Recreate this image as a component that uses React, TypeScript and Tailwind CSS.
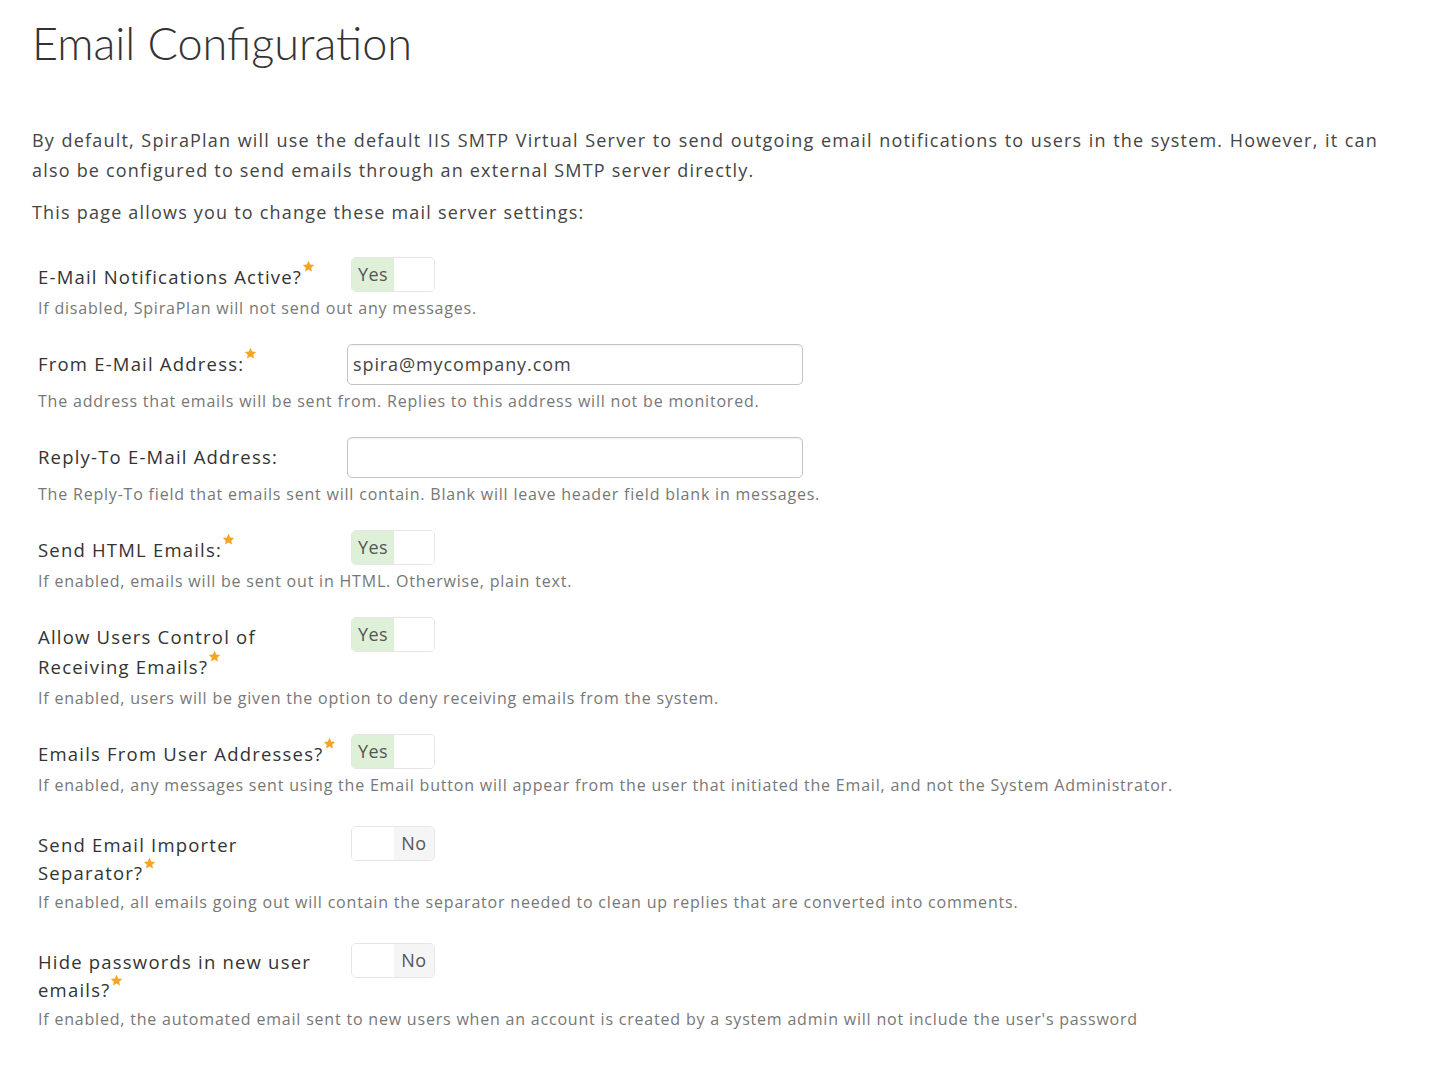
import React from "react";

const body = { fontFamily: '"Open Sans", "Noto Sans", sans-serif' };

function Star() {
  return (
    <svg viewBox="0 0 24 24" className="inline-block w-[13px] h-[13px] align-top -mt-[2px]">
      <polygon
        points="12,1.5 15.1,8.3 22.5,9.1 17,14.1 18.5,21.4 12,17.7 5.5,21.4 7,14.1 1.5,9.1 8.9,8.3"
        fill="#f5a524"
      />
    </svg>
  );
}

function Toggle({ on }: { on: boolean }) {
  return (
    <div className="flex w-[84px] h-[35px] rounded-[5px] border border-[#e6e6e6] overflow-hidden text-[18px] text-[#555] tracking-[0.5px]">
      {on ? (
        <>
          <div className="w-[42px] bg-[#dff0d8] flex items-center justify-center">Yes</div>
          <div className="flex-1 bg-white" />
        </>
      ) : (
        <>
          <div className="w-[42px] bg-white" />
          <div className="flex-1 bg-[#f5f5f5] flex items-center justify-center">No</div>
        </>
      )}
    </div>
  );
}

function TextBox({ value }: { value?: string }) {
  return (
    <div className="-ml-[4px] w-[456px] h-[41px] rounded-[5px] border border-[#c4c4c4] shadow-[inset_0_1px_2px_rgba(0,0,0,0.06)] px-[5px] flex items-center text-[18px] text-[#444] tracking-[0.9px]">
      {value}
    </div>
  );
}

type Row = {
  label: React.ReactNode;
  required?: boolean;
  control: React.ReactNode;
  help: string;
  input?: boolean;
  tight?: boolean;
};

const rows: Row[] = [
  {
    label: "E-Mail Notifications Active?",
    required: true,
    control: <Toggle on />,
    help: "If disabled, SpiraPlan will not send out any messages.",
  },
  {
    label: "From E-Mail Address:",
    required: true,
    control: <TextBox value="spira@mycompany.com" />,
    help: "The address that emails will be sent from. Replies to this address will not be monitored.",
    input: true,
  },
  {
    label: "Reply-To E-Mail Address:",
    control: <TextBox />,
    help: "The Reply-To field that emails sent will contain. Blank will leave header field blank in messages.",
    input: true,
  },
  {
    label: "Send HTML Emails:",
    required: true,
    control: <Toggle on />,
    help: "If enabled, emails will be sent out in HTML. Otherwise, plain text.",
  },
  {
    label: "Allow Users Control of Receiving Emails?",
    required: true,
    control: <Toggle on />,
    help: "If enabled, users will be given the option to deny receiving emails from the system.",
  },
  {
    label: "Emails From User Addresses?",
    required: true,
    control: <Toggle on />,
    help: "If enabled, any messages sent using the Email button will appear from the user that initiated the Email, and not the System Administrator.",
  },
  {
    label: "Send Email Importer Separator?",
    required: true,
    control: <Toggle on={false} />,
    help: "If enabled, all emails going out will contain the separator needed to clean up replies that are converted into comments.",
    tight: true,
  },
  {
    label: "Hide passwords in new user emails?",
    required: true,
    control: <Toggle on={false} />,
    help: "If enabled, the automated email sent to new users when an account is created by a system admin will not include the user's password",
    tight: true,
  },
];

export default function App() {
  return (
    <div className="min-h-screen bg-white pl-[32px] pr-[72px] pt-[15px] pb-10" style={body}>
      <h1
        className="text-[45px] font-light text-[#333] leading-[56px]"
        style={{ fontFamily: 'Lato, "Noto Sans", sans-serif' }}
      >
        Email Configuration
      </h1>

      <p className="mt-[54px] text-[18px] leading-[30px] text-[#444] text-justify tracking-[1.2px]">
        By default, SpiraPlan will use the default IIS SMTP Virtual Server to send outgoing email
        notifications to users in the system. However, it can also be configured to send emails
        through an external SMTP server directly.
      </p>
      <p className="mt-[12px] text-[18px] leading-[30px] text-[#444] tracking-[1.2px]">
        This page allows you to change these mail server settings:
      </p>

      <div className="mt-[30px] pl-[6px] flex flex-col">
        {rows.map((r, i) => (
          <div key={i} className={i === 0 ? "" : r.tight ? "mt-[28px]" : "mt-[23px]"}>
            <div className="flex items-start">
              <div
                className={`w-[313px] shrink-0 pr-[4px] text-[18.5px] text-[#333] tracking-[1.2px] pt-[5px] ${
                  r.tight ? "leading-[28px]" : "leading-[30px]"
                }`}
              >
                {r.label}
                {r.required && <Star />}
              </div>
              <div className="shrink-0">{r.control}</div>
            </div>
            <div className={`text-[16px] leading-[26px] text-[#777] tracking-[0.8px] ${r.tight ? "mt-[2px]" : "mt-[3px]"}`}>
              {r.help}
            </div>
          </div>
        ))}
      </div>
    </div>
  );
}
